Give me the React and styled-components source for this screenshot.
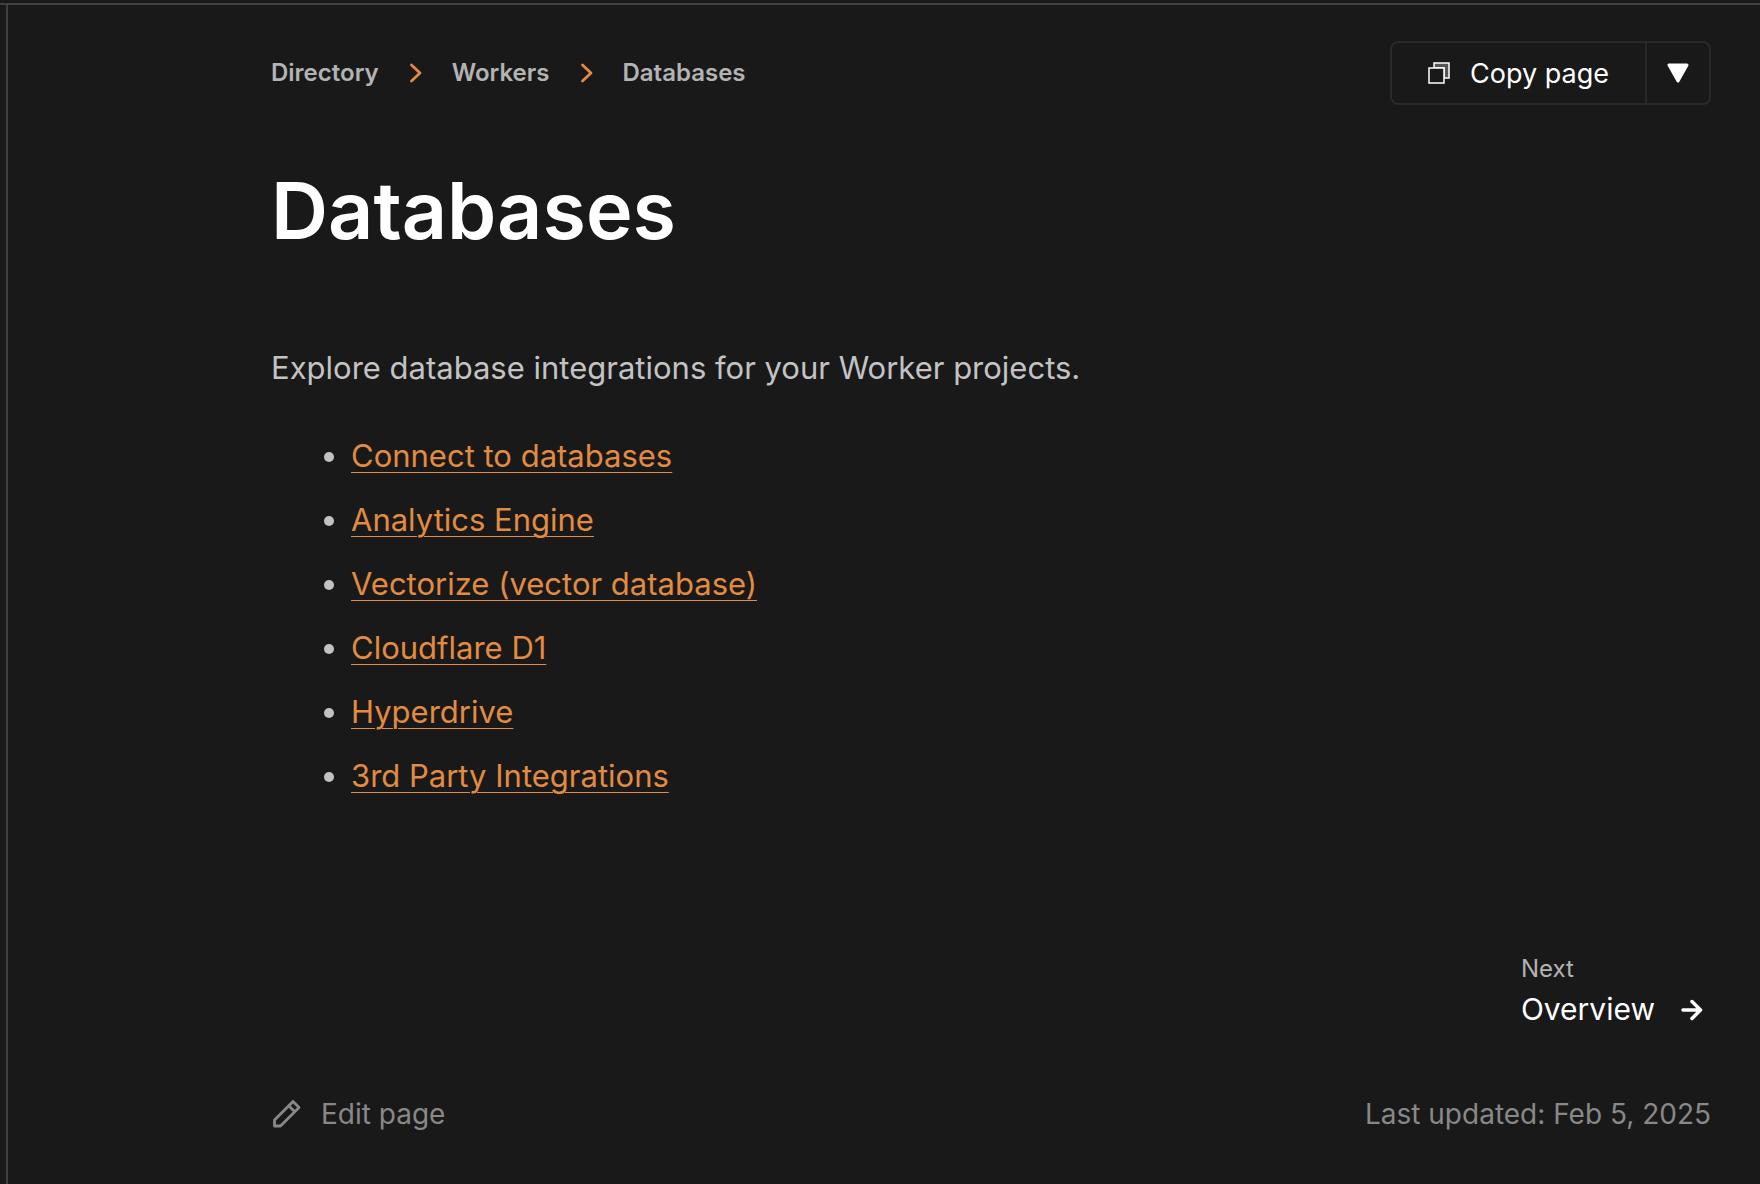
import React from "react";
import styled, { createGlobalStyle } from "styled-components";

const GlobalStyle = createGlobalStyle`
  * {
    box-sizing: border-box;
  }

  body {
    margin: 0;
    background: #191919;
    color: #c3c3c3;
    font-family: Inter, "Liberation Sans", sans-serif;
    font-size: 31px;
    line-height: 48px;
  }
`;

const Page = styled.div`
  display: flex;
  flex-direction: column;
  min-height: 100vh;
`;

const TopBar = styled.div`
  height: 5px;
  border-bottom: 2px solid #404040;
`;

const Body = styled.div`
  display: flex;
  flex: 1;
`;

const Sidebar = styled.div`
  width: 8px;
  border-right: 2px solid #404040;
`;

const Main = styled.main`
  display: flex;
  flex: 1;
  flex-direction: column;
  padding: 36px 49px 36px 263px;
`;

const Header = styled.header`
  display: flex;
  align-items: center;
  justify-content: space-between;
`;

const Crumbs = styled.nav`
  display: flex;
  align-items: center;
  gap: 30px;
  color: #e28b42;
`;

const Crumb = styled.a`
  color: #b3b3b3;
  font-size: 24px;
  font-weight: 600;
  line-height: 32px;
  text-decoration: none;
`;

const ButtonGroup = styled.div`
  display: flex;
  height: 64px;
  border: 2px solid #292929;
  border-radius: 8px;
`;

const Button = styled.button`
  display: flex;
  align-items: center;
  justify-content: center;
  gap: 20px;
  padding: ${props => (props.$icon ? "0 20px" : "0 36px")};
  border: 0;
  background: none;
  color: #fff;
  font-family: inherit;
  font-size: 27px;

  & + & {
    border-left: 2px solid #292929;
  }
`;

const Title = styled.h1`
  margin: 57px 0 0;
  color: #fff;
  font-size: 79px;
  font-weight: 600;
  line-height: 96px;
`;

const Intro = styled.p`
  margin: 86px 0 0;
`;

const List = styled.ul`
  display: flex;
  flex-direction: column;
  gap: 16px;
  margin: 40px 0 0;
  padding-left: 80px;
`;

const ListLink = styled.a`
  color: #e28b42;
  text-decoration: underline;
  text-decoration-thickness: 1px;
  text-underline-offset: 5px;
`;

const Pagination = styled.nav`
  display: flex;
  justify-content: flex-end;
  margin-top: 149px;
  padding-right: 8px;
`;

const NextLink = styled.a`
  display: flex;
  align-items: flex-end;
  gap: 26px;
  color: #fff;
  text-decoration: none;
`;

const NextText = styled.span`
  display: flex;
  flex-direction: column;
  font-size: 30px;
  line-height: 40px;
`;

const NextLabel = styled.small`
  color: #b3b3b3;
  font-size: 24px;
`;

const ArrowIcon = styled.svg`
  margin: 8px 0;
`;

const Footer = styled.footer`
  display: flex;
  justify-content: space-between;
  margin-top: 61px;
  color: #888;
  font-size: 28px;
`;

const EditLink = styled.a`
  display: flex;
  align-items: center;
  gap: 20px;
  color: inherit;
  text-decoration: none;
`;

const links = [
  "Connect to databases",
  "Analytics Engine",
  "Vectorize (vector database)",
  "Cloudflare D1",
  "Hyperdrive",
  "3rd Party Integrations"
];

const Chevron = () => (
  <svg width="13" height="20" viewBox="0 0 13 20" fill="none" aria-hidden="true">
    <path d="M2.500 2l8.500 8-8.500 8" stroke="currentColor" strokeWidth="2.800" strokeLinecap="round" strokeLinejoin="round" />
  </svg>
);

const CopyIcon = () => (
  <svg width="22" height="22" viewBox="0 0 22 22" fill="none" aria-hidden="true">
    <path d="M6 1h15v15h-5V6H6z" fill="#555" stroke="#fff" strokeWidth="1.5" />
    <path d="M1 6h15v15H1z" fill="#191919" stroke="#fff" strokeWidth="1.5" />
  </svg>
);

const Triangle = () => (
  <svg width="22" height="20" viewBox="0 0 22 20" aria-hidden="true">
    <path d="M2 2h18l-9 16z" fill="currentColor" stroke="currentColor" strokeWidth="3" strokeLinejoin="round" />
  </svg>
);

const Pencil = () => (
  <svg width="30" height="30" viewBox="0 0 30 30" fill="none" aria-hidden="true">
    <path d="M3.500 21v6h6L28 8.500l-6-6zM17.500 6.500l6 6" stroke="currentColor" strokeWidth="2.800" strokeLinejoin="round" />
  </svg>
);

export default function App() {
  return (
    <>
      <GlobalStyle />
      <Page>
        <TopBar />
        <Body>
          <Sidebar />
          <Main>
            <Header>
              <Crumbs aria-label="Breadcrumb">
                <Crumb href="#directory">Directory</Crumb>
                <Chevron />
                <Crumb href="#workers">Workers</Crumb>
                <Chevron />
                <Crumb href="#databases">Databases</Crumb>
              </Crumbs>
              <ButtonGroup>
                <Button type="button">
                  <CopyIcon />
                  Copy page
                </Button>
                <Button type="button" $icon aria-label="More options">
                  <Triangle />
                </Button>
              </ButtonGroup>
            </Header>
            <Title>Databases</Title>
            <Intro>Explore database integrations for your Worker projects.</Intro>
            <List>
              {links.map(link => (
                <li key={link}>
                  <ListLink href="#">{link}</ListLink>
                </li>
              ))}
            </List>
            <Pagination>
              <NextLink href="#overview">
                <NextText>
                  <NextLabel>Next</NextLabel>
                  Overview
                </NextText>
                <ArrowIcon width="22" height="22" viewBox="0 0 22 22" fill="none" aria-hidden="true">
                  <path d="M2 11h17M11 2.500l8.500 8.500-8.500 8.500" stroke="currentColor" strokeWidth="3.500" strokeLinecap="round" strokeLinejoin="round" />
                </ArrowIcon>
              </NextLink>
            </Pagination>
            <Footer>
              <EditLink href="#edit">
                <Pencil />
                Edit page
              </EditLink>
              <span>Last updated: Feb 5, 2025</span>
            </Footer>
          </Main>
        </Body>
      </Page>
    </>
  );
}
